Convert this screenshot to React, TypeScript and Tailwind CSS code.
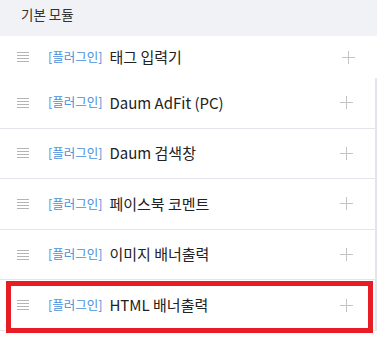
const font = { fontFamily: '"Noto Sans CJK KR", "Noto Sans", sans-serif' };

const items = [
  { title: '태그 입력기', first: true },
  { title: 'Daum AdFit (PC)' },
  { title: 'Daum 검색창' },
  { title: '페이스북 코멘트' },
  { title: '이미지 배너출력' },
  { title: 'HTML 배너출력', selected: true },
];

function Handle() {
  return (
    <svg width="12" height="10" viewBox="0 0 12 10" className="shrink-0">
      <line x1="0" y1="0.5" x2="12" y2="0.5" stroke="#b4b4b4" strokeWidth="1" />
      <line x1="0" y1="3.5" x2="12" y2="3.5" stroke="#b4b4b4" strokeWidth="1" />
      <line x1="0" y1="6.5" x2="12" y2="6.5" stroke="#b4b4b4" strokeWidth="1" />
      <line x1="0" y1="9.5" x2="12" y2="9.5" stroke="#b4b4b4" strokeWidth="1" />
    </svg>
  );
}

function Plus() {
  return (
    <svg width="13" height="13" viewBox="0 0 13 13" className="shrink-0">
      <line x1="0" y1="6.5" x2="13" y2="6.5" stroke="#c4c4c4" strokeWidth="1" />
      <line x1="6.5" y1="0" x2="6.5" y2="13" stroke="#c4c4c4" strokeWidth="1" />
    </svg>
  );
}

export default function App() {
  return (
    <div className="w-[377px] h-[340px] bg-white overflow-hidden" style={font}>
      <div className="h-9 bg-[#f1f2f6] pt-[4px] pl-[21px] text-[13.5px] leading-[20px] text-[#333]">
        기본 모듈
      </div>
      {items.map((item) => (
        <div
          key={item.title}
          className={`relative flex items-center pl-[17px] pr-[22px] ${
            item.first ? 'h-[42px]' : 'h-[50.6px] border-b border-r-2 border-[#e4e5ec]'
          }`}
        >
          <Handle />
          <span className="ml-[19px] text-[12.5px] text-[#4a8fdc]">[플러그인]</span>
          <span className="ml-[7px] text-[15px] text-[#222]">{item.title}</span>
          <span className="ml-auto">
            <Plus />
          </span>
          {item.selected && (
            <div className="absolute left-[6px] top-[1px] w-[367px] h-[52px] border-[5px] border-[#e81c24]" />
          )}
        </div>
      ))}
    </div>
  );
}
